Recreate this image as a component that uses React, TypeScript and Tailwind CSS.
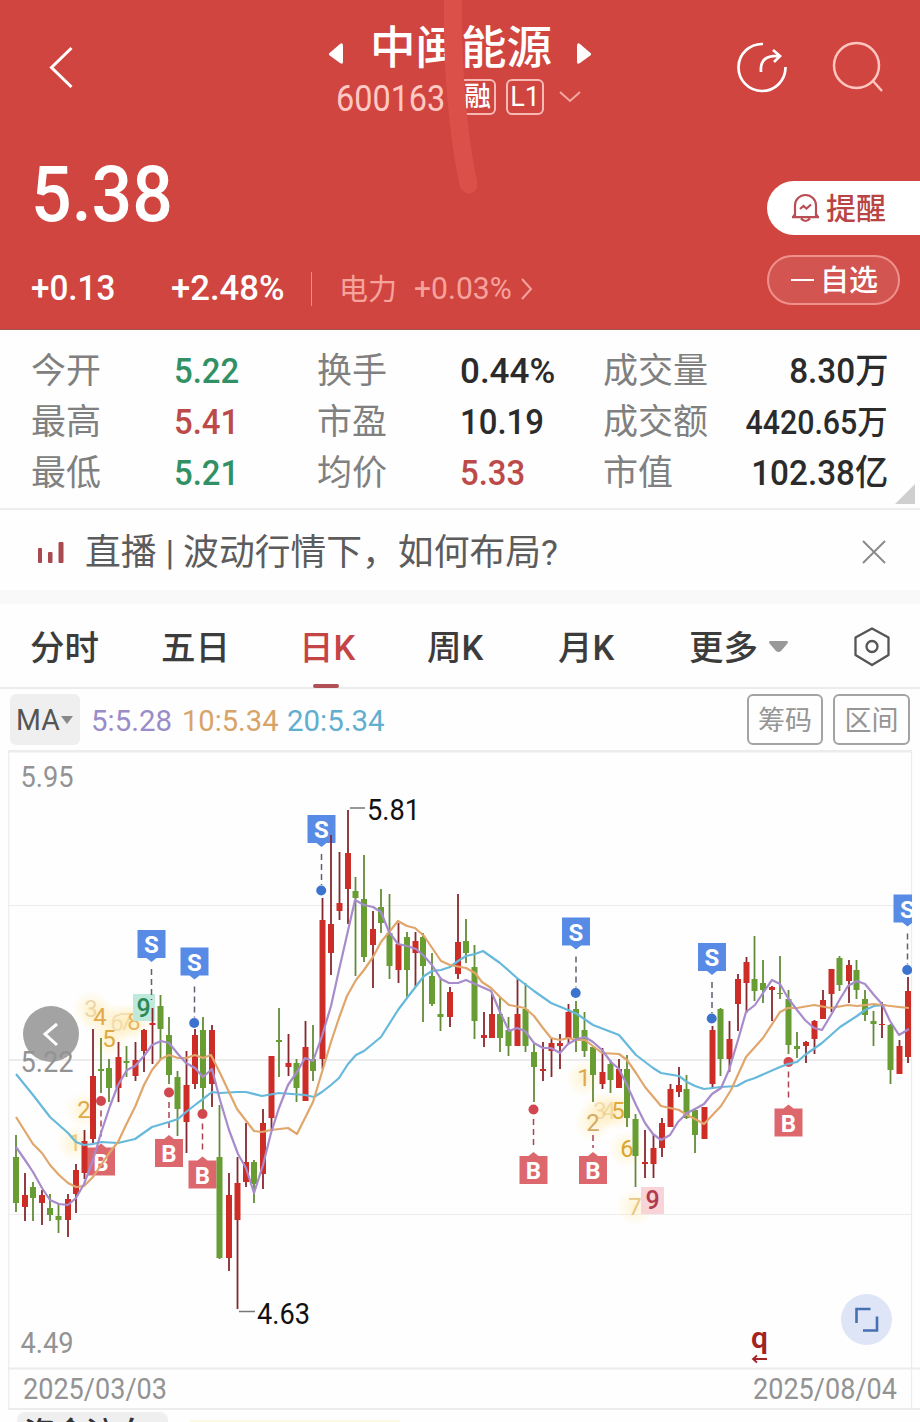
import { ReactNode } from "react";

// [x, high, low, body top, body bottom, rising]
type Candle = [number, number, number, number, number, 0 | 1];

const CANDLES: Candle[] = [
  [16, 1135, 1212, 1157, 1203, 0],
  [25, 1173, 1221, 1195, 1207, 1],
  [33, 1182, 1221, 1187, 1198, 0],
  [42, 1190, 1225, 1195, 1203, 1],
  [50, 1194, 1221, 1208, 1215, 0],
  [58.5, 1204, 1233, 1216, 1220, 0],
  [68, 1194, 1237, 1199, 1220, 1],
  [76, 1164, 1213, 1170, 1194, 1],
  [84.5, 1130, 1179, 1141, 1173, 1],
  [93, 1029, 1143, 1076, 1139, 1],
  [101, 1038, 1093, 1069, 1071, 0],
  [109, 1059, 1102, 1068, 1088, 0],
  [118.5, 1042, 1102, 1057, 1088, 1],
  [126.5, 1046, 1077, 1061, 1063, 0],
  [135.5, 1042, 1081, 1060, 1076, 1],
  [144, 1029, 1072, 1030, 1051, 1],
  [152.5, 1008, 1064, 1023, 1025, 1],
  [160.5, 995, 1060, 1006, 1029, 0],
  [169, 1017, 1084, 1035, 1075, 0],
  [177.5, 1071, 1136, 1077, 1109, 0],
  [186.5, 1051, 1153, 1085, 1122, 1],
  [195, 1029, 1089, 1035, 1084, 1],
  [203, 1017, 1110, 1030, 1088, 0],
  [212, 1025, 1107, 1030, 1084, 1],
  [219.5, 1105, 1259, 1157, 1258, 0],
  [229, 1173, 1271, 1195, 1258, 1],
  [237.5, 1157, 1309, 1183, 1220, 1],
  [246, 1123, 1187, 1162, 1182, 1],
  [254, 1160, 1203, 1162, 1184, 0],
  [263, 1109, 1189, 1123, 1174, 1],
  [271.5, 1056, 1130, 1056, 1118, 1],
  [279, 1008, 1077, 1040, 1042, 0],
  [288.5, 1034, 1076, 1063, 1067, 1],
  [296.5, 1059, 1102, 1063, 1088, 0],
  [305.5, 1021, 1101, 1047, 1101, 1],
  [313, 1025, 1081, 1059, 1071, 0],
  [322.5, 898, 1069, 920, 1059, 1],
  [331, 835, 975, 924, 953, 1],
  [339.5, 852, 920, 903, 911, 1],
  [348, 810, 924, 853, 889, 1],
  [355.5, 877, 976, 891, 898, 0],
  [364, 855, 962, 899, 957, 0],
  [373, 911, 988, 929, 945, 1],
  [381, 889, 933, 907, 923, 0],
  [389.5, 894, 979, 933, 966, 0],
  [398.5, 923, 983, 944, 970, 1],
  [407, 932, 997, 937, 970, 0],
  [415.5, 932, 987, 941, 953, 1],
  [423, 933, 1022, 937, 966, 0],
  [432, 953, 1006, 976, 1004, 0],
  [440.5, 977, 1031, 1014, 1017, 0],
  [450, 987, 1027, 992, 1017, 1],
  [458, 894, 979, 942, 974, 1],
  [466, 919, 963, 941, 953, 0],
  [474.5, 945, 1039, 967, 1021, 0],
  [484, 1012, 1047, 1035, 1038, 1],
  [492, 993, 1038, 1014, 1038, 1],
  [500, 997, 1052, 1014, 1038, 0],
  [508.5, 1017, 1056, 1030, 1046, 0],
  [517.5, 979, 1046, 1014, 1046, 1],
  [525.5, 983, 1052, 1009, 1046, 0],
  [534, 1044, 1102, 1052, 1067, 0],
  [543, 1042, 1081, 1069, 1071, 1],
  [551.5, 1039, 1077, 1043, 1051, 1],
  [560, 1034, 1069, 1043, 1046, 1],
  [568.5, 1004, 1043, 1012, 1038, 1],
  [576, 1001, 1052, 1009, 1038, 0],
  [584.5, 1012, 1057, 1030, 1051, 0],
  [593, 1047, 1102, 1047, 1075, 0],
  [602.5, 1048, 1089, 1072, 1084, 1],
  [610.5, 1060, 1093, 1064, 1080, 0],
  [619, 1059, 1088, 1069, 1088, 1],
  [627, 1055, 1127, 1069, 1118, 0],
  [635.5, 1114, 1187, 1119, 1156, 0],
  [645, 1130, 1178, 1162, 1164, 1],
  [653.5, 1135, 1178, 1148, 1164, 1],
  [662, 1118, 1157, 1123, 1148, 1],
  [670.5, 1084, 1127, 1089, 1127, 1],
  [679, 1067, 1097, 1085, 1092, 1],
  [686.5, 1075, 1119, 1089, 1118, 0],
  [695, 1108, 1153, 1110, 1135, 0],
  [704.5, 1107, 1139, 1107, 1139, 1],
  [712.5, 1026, 1089, 1030, 1084, 1],
  [720.5, 1008, 1076, 1009, 1059, 0],
  [729.5, 1021, 1072, 1039, 1059, 1],
  [738, 974, 1031, 979, 1004, 1],
  [746.5, 957, 1013, 962, 983, 1],
  [754.5, 936, 1001, 979, 991, 0],
  [763, 960, 1003, 983, 990, 0],
  [772, 986, 1021, 987, 990, 1],
  [780, 956, 999, 993, 994, 0],
  [788.5, 990, 1054, 999, 1045, 0],
  [797, 1032, 1058, 1046, 1049, 0],
  [806, 1041, 1063, 1042, 1046, 1],
  [814.5, 1020, 1054, 1021, 1039, 1],
  [823, 990, 1019, 1000, 1019, 1],
  [831.5, 969, 1012, 969, 994, 1],
  [839.5, 956, 991, 958, 985, 0],
  [849, 960, 1003, 965, 981, 1],
  [856.5, 960, 999, 970, 990, 0],
  [865, 990, 1021, 999, 1015, 0],
  [873.5, 1011, 1046, 1021, 1024, 0],
  [882, 1002, 1038, 1024, 1025, 1],
  [890.5, 1024, 1084, 1025, 1070, 0],
  [899.5, 1040, 1074, 1046, 1074, 1],
  [908, 977, 1063, 991, 1057, 1],
];

const MA5 =
  "16,1147 25,1160 33,1172 42,1188 50,1200 59,1204 68,1205 76,1198 84,1184 93,1160 101,1133 110,1106 118,1085 127,1070 135,1066 144,1056 152,1045 161,1041 169,1043 178,1054 186,1063 195,1068 203,1077 212,1069 220,1100 229,1130 238,1154 246,1168 254,1193 263,1165 271,1133 279,1108 288,1085 297,1072 305,1058 313,1061 322,1036 331,1006 339,970 347,935 355,900 364,905 373,907 381,912 389,932 398,944 407,946 416,949 424,956 432,965 441,979 449,983 458,983 466,980 475,984 491,991 500,1012 509,1031 517,1028 525,1031 534,1043 543,1048 551,1048 560,1053 568,1044 577,1039 585,1037 593,1042 602,1050 611,1062 619,1069 627,1085 636,1105 645,1123 653,1134 661,1140 670,1135 678,1122 687,1113 695,1109 704,1104 712,1094 721,1088 729,1070 738,1040 746,1012 755,1005 763,993 772,980 780,984 788,998 797,1010 805,1020 814,1028 822,1030 831,1015 840,999 848,986 857,981 865,984 874,995 882,1004 890,1021 899,1035 909,1029";
const MA10 =
  "16,1117 33,1144 42,1153 50,1165 59,1175 68,1183 76,1187 84,1186 93,1177 101,1165 110,1152 118,1142 127,1123 135,1107 144,1085 152,1070 161,1059 169,1055 178,1058 186,1058 195,1055 203,1058 211,1055 220,1073 237,1109 254,1131 262,1132 271,1130 288,1128 297,1134 305,1118 313,1102 322,1072 331,1042 339,1018 347,996 356,980 364,970 373,957 381,942 390,931 398,921 407,926 415,928 424,936 441,961 450,965 466,968 475,973 482,982 491,988 500,997 509,1005 525,1008 534,1016 543,1028 551,1038 560,1040 568,1038 577,1040 585,1040 602,1053 619,1054 627,1060 636,1073 645,1087 661,1106 670,1108 679,1110 687,1115 695,1119 704,1124 721,1106 731,1090 746,1057 763,1038 780,1012 788,1008 797,1008 814,1005 831,1008 848,1005 857,1006 874,1004 882,1005 899,1007 909,1008";
const MA20 =
  "16,1074 33,1095 50,1117 68,1133 76,1142 84,1145 93,1144 101,1142 118,1143 135,1139 152,1127 169,1122 178,1119 186,1112 195,1105 203,1099 212,1092 220,1093 237,1092 246,1092 262,1096 279,1093 305,1095 314,1097 322,1092 331,1085 339,1078 348,1064 356,1055 364,1051 381,1037 398,1010 407,998 424,976 432,971 441,970 450,967 458,961 466,956 475,954 483,951 500,963 517,978 534,991 551,1003 568,1010 577,1014 593,1025 619,1035 636,1055 653,1068 661,1073 679,1076 687,1082 695,1086 704,1089 721,1087 737,1086 746,1081 755,1078 780,1067 788,1064 797,1062 805,1055 822,1043 840,1027 857,1016 865,1010 874,1006 886,1005";

// x centre and top of the label; the dashed stem and the dot follow from them
const SELLS = [
  { x: 151.5, y: 930, dot: false },
  { x: 194.5, y: 947.5, dot: true },
  { x: 321.5, y: 815, dot: true },
  { x: 576, y: 917.5, dot: true },
  { x: 712, y: 943, dot: true },
  { x: 907.5, y: 894.5, dot: true },
];
const BUYS = [
  { x: 101, y: 1147.5, dot: true },
  { x: 169, y: 1139, dot: true },
  { x: 202.5, y: 1160.5, dot: true },
  { x: 533.5, y: 1156, dot: true },
  { x: 593, y: 1156, dot: false },
  { x: 788.5, y: 1108.5, dot: true },
];

// nine-turn counters around the turning points
const COUNTS: [string, number, number, number, string][] = [
  ["1", 75, 1151, 0.7, "#e8b84e"],
  ["2", 84, 1118, 1, "#dfa94a"],
  ["3", 91, 1017, 0.5, "#dfb877"],
  ["4", 100, 1025, 0.9, "#e0a23c"],
  ["5", 109, 1047, 1, "#dfa93f"],
  ["6", 117, 1031, 0.35, "#dfb877"],
  ["7", 126, 1030, 0.35, "#dfb877"],
  ["8", 134, 1030, 0.8, "#e0a84a"],
  ["1", 584, 1086, 1, "#dfa94a"],
  ["2", 593, 1131, 0.8, "#c99845"],
  ["3", 600, 1119, 0.4, "#dfb877"],
  ["4", 609, 1119, 0.4, "#dfb877"],
  ["5", 618, 1119, 1, "#dfa93f"],
  ["6", 627, 1157, 1, "#d9a52f"],
  ["7", 635, 1215, 0.7, "#dfb45a"],
];

const STATS = [
  ["今开", "5.22", "text-[#319165]", "换手", "0.44%", "text-[#2b2b2b]", "成交量", "8.30万"],
  ["最高", "5.41", "text-[#bb4a49]", "市盈", "10.19", "text-[#2b2b2b]", "成交额", "4420.65万"],
  ["最低", "5.21", "text-[#319165]", "均价", "5.33", "text-[#bb4a49]", "市值", "102.38亿"],
];

/** Condensed figures, close to a DIN face */
function Num({ children, className = "scale-x-[.93]" }: { children: ReactNode; className?: string }) {
  return <span className={`inline-block origin-left whitespace-nowrap ${className}`}>{children}</span>;
}

function Header() {
  return (
    <header className="relative h-[330px] border-b border-[#a5534f] bg-[#d04540] text-white">
      <div className="flex h-[130px] items-start">
        <svg className="ml-[48px] mt-[45px] h-[46px] w-[26px]" viewBox="0 0 26 46" fill="none" stroke="#fff" strokeWidth="3">
          <path d="M23.5 3 3.5 22.5 23.5 42" />
        </svg>
        <div className="ml-[254px] mt-[19px] w-[266px]">
          <div className="flex h-[60px] items-center">
            <svg className="mt-[9px] h-6 w-4" viewBox="0 0 16 24" fill="#fff">
              <path d="M1 11.5 12 2q3-2 3 2v16q0 3-3 1L1 13z" />
            </svg>
            <h1 className="ml-[26px] text-[45.5px] leading-[60px] font-medium">中闽能源</h1>
            <svg className="ml-[24px] mt-[9px] h-6 w-4" viewBox="0 0 16 24" fill="#fff">
              <path d="M15 11.5 4 2Q1 0 1 4v16q0 3 3 1l11-8z" />
            </svg>
          </div>
          <div className="flex h-[36px] items-center text-[#ffc9c3]">
            <Num className="ml-[8px] mt-[4px] w-[123px] scale-x-[.9] text-[36px]">600163</Num>
            <span className="flex h-[36px] w-[37px] items-center justify-center rounded-md border-2 border-[#f6b9b3] pt-px text-[27px] font-medium text-white">
              融
            </span>
            <span className="ml-[10px] flex h-[36px] w-[38px] items-center justify-center rounded-md border-2 border-[#f6b9b3] text-[27px] text-white">
              L1
            </span>
            <svg className="ml-[15px] h-4 w-[22px]" viewBox="0 0 22 16" fill="none" stroke="#f2a9a2" strokeWidth="2">
              <path d="m1 3 10 9L21 3" />
            </svg>
          </div>
        </div>
        <svg className="ml-[141px] mt-[40px] h-[54px] w-[54px]" viewBox="735 40 54 54" fill="none" stroke="#fff" strokeWidth="2.700">
          <path d="M763 44A23.5 23.5 0 1 0 785.500 67" />
          <path d="M761 72C760 60 766 55 780 56M773 50l7 6-6 6" />
        </svg>
        <svg className="ml-[43px] mt-[40px] h-[54px] w-[54px]" viewBox="832 40 54 54" fill="none" stroke="#ffc6c0" strokeWidth="2.500">
          <circle cx="856.500" cy="65.500" r="22.500" />
          <path d="m873 81 9 10" />
        </svg>
      </div>
      <div className="flex h-[200px]">
        <div className="w-[767px] pl-[31px]">
          <Num className="mt-[19px] h-[92px] scale-x-[.93] text-[77px] leading-[92px] font-medium">5.38</Num>
          <div className="mt-[23px] flex h-[50px] items-center text-[35px]">
            <Num className="w-[140px] scale-x-[.95] font-medium">+0.13</Num>
            <Num className="w-[140px] scale-x-[.99] font-medium">+2.48%</Num>
            <span className="h-[34px] w-px bg-[#e58d88]" />
            <span className="ml-[27px] mt-[3px] w-[75px] text-[29px] text-[#f6a39c]">电力</span>
            <Num className="w-[106px] scale-x-[.97] text-[31px] text-[#f6a39c]">+0.03%</Num>
            <svg className="h-[22px] w-[13px]" viewBox="0 0 13 22" fill="none" stroke="#f6a39c" strokeWidth="2">
              <path d="m2 1 9 10-9 10" />
            </svg>
          </div>
        </div>
        <div className="flex-1 pt-[51px]">
          <button className="flex h-[54px] w-full items-center rounded-l-full bg-white pl-[24px] text-[30px] font-medium text-[#b94444]">
            <svg className="mr-[6px] h-[30px] w-[29px]" viewBox="0 0 29 30" fill="none" stroke="#b94e54" strokeWidth="2.200">
              <path d="M4 24V12.500a10.500 10.500 0 0 1 21 0V24M2 24l2-3M27 24l-2-3M1 24.200h27M10 25.500q4.500 5 9 0M9 16l3.500-3 3 2.500 4.500-4" />
            </svg>
            提醒
          </button>
          <button className="mt-[20px] flex h-[50px] w-[133px] items-center rounded-full border-2 border-[#ee918b] bg-[#d35551] pl-[22px] text-[29px] font-medium">
            <span className="mr-[6px] h-[2.5px] w-[23px] bg-white" />
            <span className="pt-[4px]">自选</span>
          </button>
        </div>
      </div>
      {/* brush stroke over the title */}
      <svg className="absolute left-[436px] top-0 h-[200px] w-[50px]" viewBox="436 0 50 200" fill="#dc504a">
        <path d="M444 0C443 60 448 130 460 187Q464 195 472 193Q479 190 477 180C468 140 461 70 462 0Z" />
      </svg>
    </header>
  );
}

function Stats() {
  return (
    <section className="relative h-[180px] border-b-2 border-[#ededed] pl-[31px] pr-[32px] pt-[15px]">
      {STATS.map(([a, av, ac, b, bv, bc, c, cv]) => (
        <div key={a} className="grid h-[51px] grid-cols-[143px_143px_143px_143px_1fr] items-center text-[35px] text-[#808080]">
          <span className="pt-px">{a}</span>
          <Num className={`scale-x-[.94] font-medium ${ac}`}>{av}</Num>
          <span className="pt-px">{b}</span>
          <Num className={`font-medium ${bc} ${bv.endsWith("%") ? "scale-x-[1]" : "scale-x-[.94]"}`}>{bv}</Num>
          <div className="flex items-center justify-between">
            <span className="whitespace-nowrap pt-px">{c}</span>
            <span
              className={`origin-right whitespace-nowrap font-medium text-[#2b2b2b] ${
                cv.length > 7 ? "scale-x-[.92] text-[33px]" : "scale-x-[.95]"
              }`}
            >
              {cv}
            </span>
          </div>
        </div>
      ))}
      <svg className="absolute bottom-[4px] right-[5px] h-5 w-5" viewBox="0 0 20 20" fill="#cfcfcf">
        <path d="M20 0v20H0z" />
      </svg>
    </section>
  );
}

function Notice() {
  return (
    <section className="flex h-[94px] items-center border-b-[14px] border-[#f9f9f9] pl-[37px] pr-[34px] pt-[3px]">
      <svg className="h-[24px] w-[28px]" viewBox="0 0 28 24" fill="#a84a50">
        <rect x="1" y="8" width="4" height="15" rx="1" />
        <rect x="11" y="12" width="4.500" height="11" rx="1" />
        <rect x="21.500" y="2" width="5" height="21" rx="1" />
      </svg>
      <p className="ml-[20px] flex-1 pt-[5px] text-[35.8px] text-[#5c5c5c]">直播 | 波动行情下，如何布局?</p>
      <svg className="h-[24px] w-[24px]" viewBox="0 0 24 24" stroke="#8a8a8a" strokeWidth="2">
        <path d="m1 1 22 22M23 1 1 23" />
      </svg>
    </section>
  );
}

function Tabs() {
  return (
    <nav className="flex h-[85px] items-center border-b-2 border-[#ebebeb] pl-[30px] pt-[2px] text-[34.5px] font-medium text-[#3c3c3c]">
      <span className="w-[131px] pt-[4px]">分时</span>
      <span className="w-[138px] pt-[4px]">五日</span>
      <span className="relative w-[128px] pt-[4px] text-[#c54546]">
        日K
        <i className="absolute -bottom-[14px] left-[14px] h-[4px] w-[26px] rounded bg-[#b05054]" />
      </span>
      <span className="w-[131px] pt-[4px]">周K</span>
      <span className="w-[131px] pt-[4px]">月K</span>
      <span className="pt-[4px]">更多</span>
      <svg className="ml-[11px] h-[12px] w-[19px]" viewBox="0 0 19 12" fill="#999">
        <path d="M1 0h17q2 1 0 3l-6 7q-2.500 2-5 0L1 3q-2-2 0-3z" />
      </svg>
      <svg className="ml-[65px] h-[40px] w-[38px]" viewBox="0 0 38 40" fill="none" stroke="#555" strokeWidth="2.300" strokeLinejoin="round">
        <path d="m19 1.500 16.500 9V28L19 38 2.500 28V10.500z" />
        <circle cx="19" cy="19.500" r="5.500" />
      </svg>
    </nav>
  );
}

function MaBar() {
  return (
    <div className="flex h-[61px] items-center pl-[10px] pr-[10px] text-[30px]">
      <div className="flex h-[51px] w-[70px] items-center rounded-md bg-[#efefef] pl-[6px] text-[#555]">
        <Num className="w-[45px] scale-x-[.95]">MA</Num>
        <svg className="h-[8px] w-[12px]" viewBox="0 0 12 8" fill="#888">
          <path d="M0 0h12L6 8z" />
        </svg>
      </div>
      <Num className="ml-[11px] w-[91px] scale-x-[.98] pt-px text-[#9a8cc9]">5:5.28</Num>
      <Num className="w-[105px] scale-x-[.97] pt-px text-[#d8a368]">10:5.34</Num>
      <Num className="flex-1 scale-x-[.98] pt-px text-[#62aed0]">20:5.34</Num>
      <span className="flex h-[51px] w-[76px] items-center justify-center rounded-md border-2 border-[#a3a3a3] pt-[4px] text-[27px] text-[#959595]">
        筹码
      </span>
      <span className="ml-[10px] flex h-[51px] w-[77px] items-center justify-center rounded-md border-2 border-[#a3a3a3] pt-[4px] text-[27px] text-[#959595]">
        区间
      </span>
    </div>
  );
}

function Chart() {
  return (
    <svg className="block h-[660px] w-full" viewBox="0 750 920 660">
      <defs>
        <clipPath id="plot">
          <rect x="8" y="750" width="904" height="620" />
        </clipPath>
        <radialGradient id="glow">
          <stop offset="0" stopColor="#ffe9a8" stopOpacity=".5" />
          <stop offset="1" stopColor="#ffe9a8" stopOpacity="0" />
        </radialGradient>
      </defs>
      <g fill="none" stroke="#ececec">
        <path strokeWidth="2.500" d="M8 751.200H912" />
        <path strokeWidth="1.200" d="M8.800 751V1409M911.500 751V1409M8 905.500H912M8 1214.500H912" />
        <path strokeWidth="2" d="M8 1060H912M8 1368.500H920M8 1409H920" />
      </g>
      <circle cx="51" cy="1034" r="28" fill="#a3a3a3" />
      <path d="M57 1024 45 1034 57 1045" fill="none" stroke="#fff" strokeWidth="3" />

      {COUNTS.map(([n, x, y]) => (
        <circle key={n + x} cx={x} cy={y - 8} r="19" fill="url(#glow)" />
      ))}
      <g fontSize="24" textAnchor="middle">
        {COUNTS.map(([n, x, y, opacity, fill]) => (
          <text key={n + x} x={x} y={y} fill={fill} opacity={opacity}>
            {n}
          </text>
        ))}
      </g>
      <rect x="133" y="994" width="22" height="27" fill="#bfe9da" />
      <text x="143.500" y="1017" fontSize="25" fontWeight="500" textAnchor="middle" fill="#2c8a57">9</text>
      <rect x="641" y="1187" width="23" height="27" fill="#f8d3d8" />
      <text x="652.500" y="1209" fontSize="25" fontWeight="500" textAnchor="middle" fill="#b13a4c">9</text>

      <g clipPath="url(#plot)" fontSize="24" fontWeight="700" textAnchor="middle">
        {SELLS.map(({ x, y, dot }) => (
          <g key={x}>
            <path d={`M${x - 14} ${y}h28v28h-9l-5 4-5-4h-9z`} fill="#588be6" />
            <text x={x} y={y + 23} fill="#fff">S</text>
            <path d={`M${x} ${y + 39}V${y + 70}`} stroke="#5e6270" strokeWidth="1.500" strokeDasharray="6 4" />
            {dot && <circle cx={x - 0.3} cy={y + 75.500} r="5" fill="#3c73cf" />}
          </g>
        ))}
        {BUYS.map(({ x, y, dot }) => (
          <g key={x}>
            <path d={`M${x - 14} ${y}h9l5-4 5 4h9v28h-28z`} fill="#dc686e" />
            <text x={x} y={y + 23} fill="#fff">B</text>
            <path d={`M${x} ${y - (dot ? 37 : 21)}V${y - 8}`} stroke="#ad4350" strokeWidth="1.500" strokeDasharray="6 4" />
            {dot && <circle cx={x} cy={y - 46.500} r="5" fill="#d2474f" />}
          </g>
        ))}
        {CANDLES.map(([x, high, low, top, bottom, up]) => (
          <g key={x} fill={up ? "#cd2d27" : "#679d32"}>
            <rect x={x - 0.9} y={high} width="1.800" height={low - high} fill={up ? "#85282f" : "#648b3a"} />
            <rect x={x - 3} y={top} width="6" height={bottom - top} />
          </g>
        ))}
        <g fill="none" strokeWidth="2.200" strokeLinejoin="round">
          <path d={`M${MA20}`} stroke="#67b9db" />
          <path d={`M${MA10}`} stroke="#e0a66b" />
          <path d={`M${MA5}`} stroke="#a78bcb" />
        </g>
      </g>

      <g stroke="#777" strokeWidth="1.500">
        <path d="M350 808h15M239 1311.500h16" />
      </g>
      <g fontSize="29" fill="#111">
        <text x="367" y="820" textLength="53" lengthAdjust="spacingAndGlyphs">5.81</text>
        <text x="257" y="1324" textLength="53" lengthAdjust="spacingAndGlyphs">4.63</text>
      </g>
      <g fontSize="29" fill="#939393">
        <text x="20.500" y="787" textLength="53" lengthAdjust="spacingAndGlyphs">5.95</text>
        <text x="20.500" y="1072" textLength="53" lengthAdjust="spacingAndGlyphs">5.22</text>
        <text x="20.500" y="1353" textLength="53" lengthAdjust="spacingAndGlyphs">4.49</text>
        <text x="23" y="1399" textLength="144" lengthAdjust="spacingAndGlyphs">2025/03/03</text>
        <text x="753" y="1399" textLength="144" lengthAdjust="spacingAndGlyphs">2025/08/04</text>
      </g>
      <circle cx="866.500" cy="1319.500" r="25.500" fill="#dde5f7" />
      <path d="M856.500 1323v-14h14M863 1330.500h14v-14" fill="none" stroke="#4770b3" strokeWidth="2.600" />
      <text x="759.500" y="1348" fontSize="30" fontWeight="600" textAnchor="middle" fill="#a32323">q</text>
      <path d="M767 1359h-14M757 1355.500l-4 3.500 4 3.500" fill="none" stroke="#a32323" strokeWidth="1.800" />
    </svg>
  );
}

export default function App() {
  return (
    <main className="h-[1422px] w-[920px] overflow-hidden bg-[#fefefe] font-['Roboto','Noto_Sans_CJK_SC',sans-serif]">
      <Header />
      <Stats />
      <Notice />
      <Tabs />
      <MaBar />
      <Chart />
      <div className="flex h-[12px] items-start overflow-hidden pl-[17px] pt-[2px]">
        <div className="h-[40px] w-[151px] rounded-t-lg bg-[#efefef] pl-[7px] text-[31px] leading-[44px] font-medium text-[#333]">
          资金流向
        </div>
        <div className="ml-[22px] mt-[8px] h-1 w-[210px] bg-[#fdf8e6]" />
      </div>
    </main>
  );
}
